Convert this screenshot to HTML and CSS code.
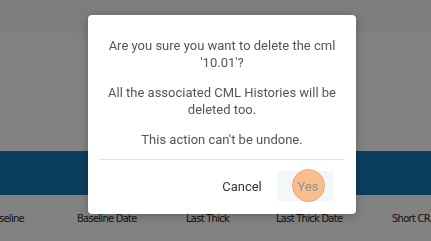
FILE: index.html
```html
<!DOCTYPE html>
<html>
<head>
<meta charset="utf-8">
<link rel="stylesheet" href="styles.css">
</head>
<body>
<div class="page">
  <div class="topbar"></div>
  <div class="spacer"></div>
  <div class="band"></div>
  <div class="cols">
    <span class="c1">seline</span>
    <span class="c2">Baseline Date</span>
    <span class="c3">Last Thick</span>
    <span class="c4">Last Thick Date</span>
    <span class="c5">Short CR</span>
  </div>
</div>
<div class="overlay"></div>
<div class="dialog">
  <div class="body">
    <p>Are you sure you want to delete the cml<br>'10.01'?</p>
    <p>All the associated CML Histories will be<br>deleted too.</p>
    <p>This action can't be undone.</p>
  </div>
  <div class="actions">
    <button class="btn cancel">Cancel</button>
    <button class="btn yes"><span class="ripple"></span><span class="lbl">Yes</span></button>
  </div>
</div>
</body>
</html>
```
FILE: styles.css
```css
html, body { margin: 0; padding: 0; }
body { width: 431px; height: 241px; overflow: hidden; background: #fff; font-family: Roboto, "Noto Sans", sans-serif; }
.page { display: flex; flex-direction: column; height: 241px; }
.topbar { height: 33px; background: #f5f5f5; }
.spacer { height: 118px; }
.band { height: 44px; background: #167ab6; }
.cols { height: 46px; position: relative; font-family: "DejaVu Sans Condensed", "DejaVu Sans", sans-serif; font-size: 11px; color: #1e1e1e; }
.cols span { position: absolute; top: 17px; white-space: nowrap; letter-spacing: -0.7px; }
.c1 { left: -1px; }
.c2 { left: 77px; }
.c3 { left: 186px; }
.c4 { left: 276px; }
.c5 { left: 392px; }
.overlay { position: fixed; inset: 0; background: rgba(0,0,0,0.49); }
.dialog { position: absolute; left: 88px; top: 15px; width: 268px; height: 199px; background: #fff; border-radius: 4px; box-shadow: 0 2px 8px rgba(0,0,0,0.25); display: flex; flex-direction: column; }
.body { margin: 0 11px; padding: 22px 0 11px; text-align: center; color: #555; font-size: 13px; line-height: 17px; border-bottom: 1px solid #e4e4e4; }
.body p { margin: 0 0 13px; }
.body p:last-child { margin-bottom: 0; }
.actions { display: flex; justify-content: flex-end; align-items: center; padding: 11px 23px 0 0; }
.btn { border: none; background: transparent; font-family: Roboto, sans-serif; font-size: 13px; height: 30px; padding: 0; cursor: pointer; }
.cancel { color: #333; width: 56px; margin-right: 7px; }
.yes { position: relative; width: 56px; background: #f3f7fa; color: #8f8f8f; }
.ripple { position: absolute; left: 15px; top: -2px; width: 31px; height: 31px; border-radius: 50%; background: #f9be8e; border: 1px solid #f0a46a; }
.lbl { position: relative; left: 3px; }
```
